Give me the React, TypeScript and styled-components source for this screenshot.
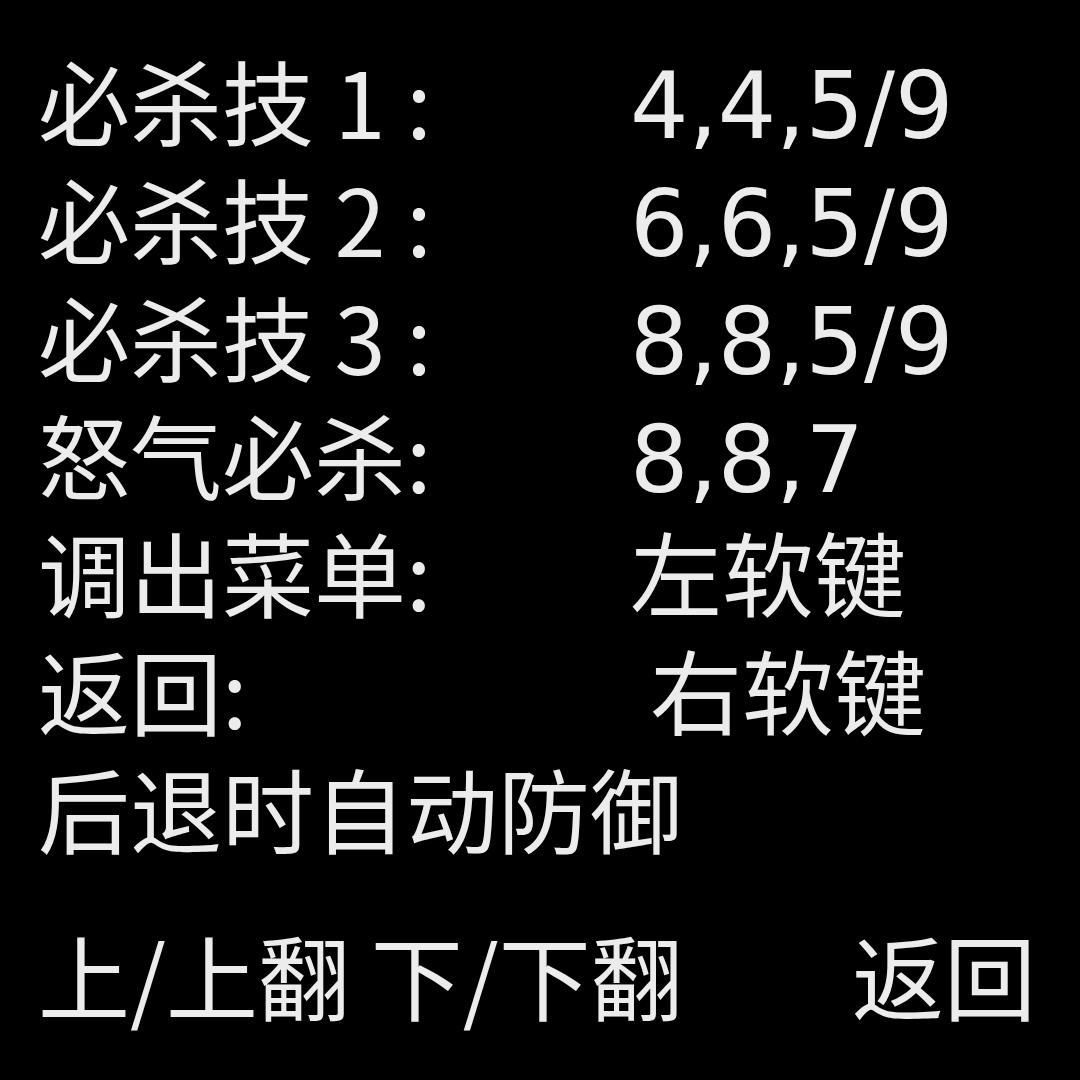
import React from "react";
import styled, { createGlobalStyle } from "styled-components";

const GlobalStyle = createGlobalStyle`
  html, body {
    margin: 0;
    padding: 0;
    background: #000;
  }
  body {
    font-family: "Noto Sans CJK SC", "Noto Sans", sans-serif;
  }
`;

const Screen = styled.div`
  width: 1080px;
  height: 1080px;
  background: #000;
  color: #ececec;
  box-sizing: border-box;
  padding: 40px 44px 0 38px;
  display: flex;
  flex-direction: column;
  font-size: 92px;
  line-height: 118px;
  overflow: hidden;
`;

const KeyTable = styled.div`
  display: grid;
  grid-template-columns: 592px auto;
  grid-auto-rows: 118px;
  align-items: start;
`;

const Label = styled.div`
  white-space: pre;
`;

/* digits use DejaVu's wider figures; the shorter ascent is evened out with top padding */
const Value = styled.div<{ $indent?: number }>`
  white-space: pre;
  font-family: "DejaVu Sans", "Noto Sans CJK SC", sans-serif;
  padding-top: 8px;
  padding-left: ${(p) => p.$indent ?? 0}px;
`;

const Note = styled.div`
  white-space: pre;
`;

const SoftKeys = styled.div`
  margin-top: 49px;
  display: flex;
  justify-content: space-between;
  white-space: pre;
`;

const bindings: { label: string; value: string; indent?: number }[] = [
  { label: "必杀技 1 :", value: "4,4,5/9" },
  { label: "必杀技 2 :", value: "6,6,5/9" },
  { label: "必杀技 3 :", value: "8,8,5/9" },
  { label: "怒气必杀:", value: "8,8,7" },
  { label: "调出菜单:", value: "左软键" },
  { label: "返回:", value: "右软键", indent: 20 },
];

export default function App() {
  return (
    <>
      <GlobalStyle />
      <Screen>
        <KeyTable>
          {bindings.map((b) => (
            <React.Fragment key={b.label}>
              <Label>{b.label}</Label>
              <Value $indent={b.indent}>{b.value}</Value>
            </React.Fragment>
          ))}
        </KeyTable>
        <Note>后退时自动防御</Note>
        <SoftKeys>
          <span>上/上翻 下/下翻</span>
          <span>返回</span>
        </SoftKeys>
      </Screen>
    </>
  );
}
